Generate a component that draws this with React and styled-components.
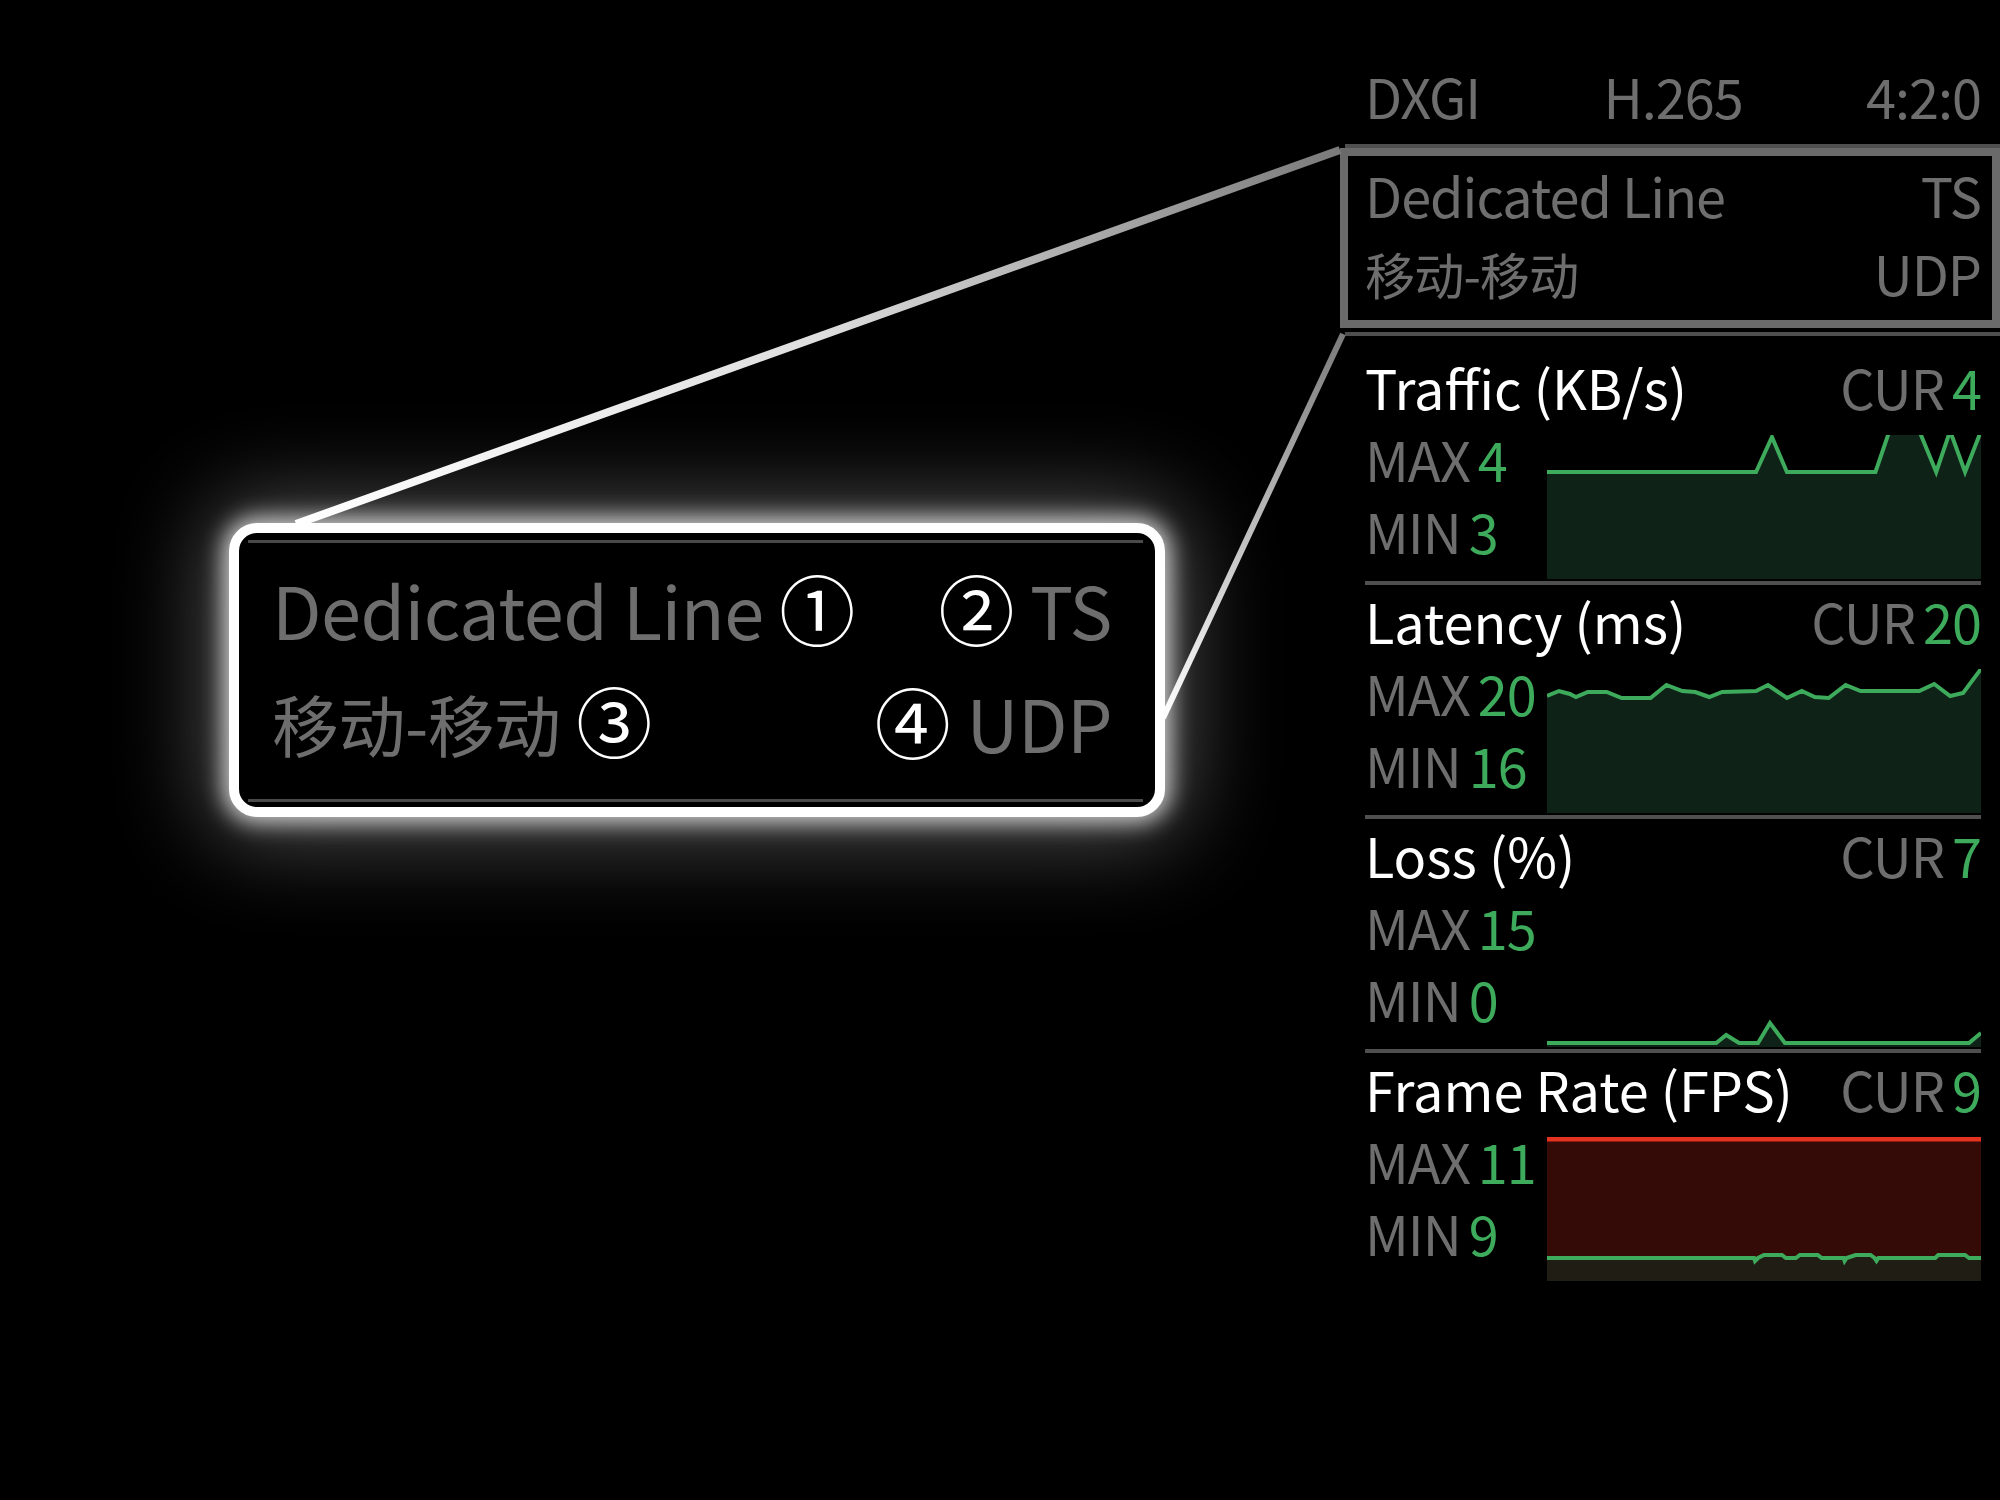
import styled, { createGlobalStyle } from "styled-components";

const GlobalStyle = createGlobalStyle`
  html, body {
    margin: 0;
    padding: 0;
    background: #000;
  }
  body {
    font-family: "Noto Sans CJK SC", "Noto Sans", sans-serif;
  }
`;

const GRAY = "#6e6e6e";
const GREEN = "#3dab5b";

const Page = styled.div`
  position: relative;
  width: 2000px;
  height: 1500px;
  overflow: hidden;
  background: #000;
  display: grid;
  grid-template-columns: 1365px 616px;
`;

const CalloutArea = styled.div`
  padding: 523px 0 0 229px;
`;

const Callout = styled.div`
  box-sizing: border-box;
  width: 936px;
  height: 294px;
  border: 10px solid #fff;
  border-radius: 28px;
  background: #000;
  box-shadow: 0 0 22px 6px rgba(255, 255, 255, 0.75),
    0 0 90px 24px rgba(255, 255, 255, 0.3);
  padding: 7px 12px 5px 9px;
  display: flex;
  flex-direction: column;
`;

const CalloutBar = styled.div`
  height: 6px;
  background: #4a4a4a;
`;

const CalloutRows = styled.div`
  flex: 1;
  padding: 9px 31px 21px 24px;
`;

const CalloutRow = styled.div`
  display: flex;
  justify-content: space-between;
  align-items: center;
  font-size: 72px;
  letter-spacing: -0.5px;
  line-height: 110px;
  color: ${GRAY};
  white-space: nowrap;
`;

const Mark = styled.span`
  color: #fff;
  font-size: 76px;
  letter-spacing: 0;
`;

const Cjk = styled.span`
  font-size: 0.93em;
`;

const Panel = styled.div`
  padding-top: 60px;
  display: flex;
  flex-direction: column;
  font-size: 54px;
  letter-spacing: -1px;
  white-space: nowrap;
`;

const TopRow = styled.div`
  display: flex;
  justify-content: space-between;
  line-height: 72px;
  color: ${GRAY};
`;

const Rule = styled.div`
  height: 4px;
  background: #4f4f4f;
  margin-top: ${(p) => p.$gap || 0}px;
  margin-right: ${(p) => (p.$wide ? -19 : 0)}px;
  margin-left: ${(p) => (p.$wide ? -20 : 0)}px;
`;

const Highlight = styled.div`
  border: 8px solid #6a6a6a;
  margin: 0 -19px 0 -25px;
  padding: 0 11px 8px 17px;
`;

const InfoRow = styled.div`
  display: flex;
  justify-content: space-between;
  line-height: 78px;
  color: ${GRAY};
`;

const Section = styled.section`
  margin-top: ${(p) => (p.$first ? 15 : 0)}px;
`;

const SectionHead = styled.div`
  display: flex;
  justify-content: space-between;
  line-height: 72px;
`;

const Title = styled.span`
  color: #fff;
  letter-spacing: 0;
`;

const Label = styled.span`
  color: ${GRAY};
  margin-right: 8px;
`;

const Value = styled.span`
  color: ${GREEN};
`;

const SectionBody = styled.div`
  display: flex;
  height: 156px;
`;

const Labels = styled.div`
  width: 182px;
  flex: none;
  display: flex;
  flex-direction: column;
  line-height: 72px;
`;

const ChartBox = styled.div`
  flex: 1;
  margin-top: 12px;
  height: 144px;
  svg {
    display: block;
    width: 100%;
    height: 144px;
  }
`;

const W = 436;
const H = 144;

const toLine = (pts) => pts.map(([x, y]) => `${x},${y}`).join(" ");
const toArea = (pts) =>
  `M0,${H} ` + pts.map(([x, y]) => `L${x},${y}`).join(" ") + ` L${W},${H} Z`;

function Chart({ points, fill = "#0f2218" }) {
  return (
    <svg viewBox={`0 0 ${W} ${H}`} preserveAspectRatio="none">
      <path d={toArea(points)} fill={fill} />
      <polyline
        points={toLine(points)}
        fill="none"
        stroke={GREEN}
        strokeWidth="4"
      />
    </svg>
  );
}

function FrameChart({ points }) {
  return (
    <svg viewBox={`0 0 ${W} ${H}`} preserveAspectRatio="none">
      <rect x="0" y="0" width={W} height={H} fill="#340b07" />
      <path d={toArea(points)} fill="#201d14" />
      <line x1="0" y1="2" x2={W} y2="2" stroke="#e3321f" strokeWidth="5" />
      <polyline points={toLine(points)} fill="none" stroke={GREEN} strokeWidth="4" />
    </svg>
  );
}

const traffic = [
  [0, 37], [210, 37], [226, 2], [241, 37], [330, 37], [344, -4], [374, -4],
  [391, 37], [405, -4], [420, 37], [436, -4],
];

const latency = [
  [0, 27], [12, 22], [23, 25], [29, 28], [41, 23], [60, 23], [75, 29], [104, 29],
  [120, 16], [136, 22], [149, 23], [163, 28], [176, 23], [210, 22], [222, 16],
  [241, 29], [256, 22], [269, 28], [283, 29], [300, 16], [315, 22], [374, 22],
  [389, 15], [405, 27], [418, 24], [436, 0],
];

const loss = [
  [0, 140], [170, 140], [180, 132], [193, 140], [212, 140], [224, 120],
  [239, 140], [424, 140], [436, 130],
];

const frame = [
  [0, 121], [208, 121], [209, 124], [212, 121], [218, 118], [236, 118],
  [240, 121], [250, 121], [254, 118], [272, 118], [276, 121], [298, 121],
  [299, 124], [301, 121], [310, 118], [325, 118], [329, 121], [331, 124],
  [333, 121], [390, 121], [393, 118], [420, 118], [424, 121], [436, 121],
];

const sections = [
  { title: "Traffic (KB/s)", cur: 4, max: 4, min: 3, points: traffic },
  { title: "Latency (ms)", cur: 20, max: 20, min: 16, points: latency },
  { title: "Loss (%)", cur: 7, max: 15, min: 0, points: loss },
  { title: "Frame Rate (FPS)", cur: 9, max: 11, min: 9, points: frame, frame: true },
];

const Connectors = styled.svg`
  position: absolute;
  left: 0;
  top: 0;
  width: 2000px;
  height: 1500px;
  pointer-events: none;
`;

export default function App() {
  return (
    <>
      <GlobalStyle />
      <Page>
        <CalloutArea>
          <Callout>
            <CalloutBar />
            <CalloutRows>
              <CalloutRow>
                <span>
                  Dedicated Line <Mark>①</Mark>
                </span>
                <span>
                  <Mark>②</Mark> TS
                </span>
              </CalloutRow>
              <CalloutRow>
                <span>
                  <Cjk>移动-移动</Cjk> <Mark>③</Mark>
                </span>
                <span>
                  <Mark>④</Mark> UDP
                </span>
              </CalloutRow>
            </CalloutRows>
            <CalloutBar />
          </Callout>
        </CalloutArea>

        <Panel>
          <TopRow>
            <span>DXGI</span>
            <span>H.265</span>
            <span>4:2:0</span>
          </TopRow>
          <Rule $gap={12} $wide />
          <Highlight>
            <InfoRow>
              <span>Dedicated Line</span>
              <span>TS</span>
            </InfoRow>
            <InfoRow>
              <Cjk>移动-移动</Cjk>
              <span>UDP</span>
            </InfoRow>
          </Highlight>
          <Rule $gap={4} $wide />

          {sections.map((s, i) => (
            <Section key={s.title} $first={i === 0}>
              <SectionHead>
                <Title>{s.title}</Title>
                <span>
                  <Label>CUR</Label>
                  <Value>{s.cur}</Value>
                </span>
              </SectionHead>
              <SectionBody>
                <Labels>
                  <span>
                    <Label>MAX</Label>
                    <Value>{s.max}</Value>
                  </span>
                  <span>
                    <Label>MIN</Label>
                    <Value>{s.min}</Value>
                  </span>
                </Labels>
                <ChartBox>
                  {s.frame ? <FrameChart points={s.points} /> : <Chart points={s.points} />}
                </ChartBox>
              </SectionBody>
              {i < sections.length - 1 && <Rule $gap={2} />}
            </Section>
          ))}
        </Panel>

        <Connectors viewBox="0 0 2000 1500">
          <defs>
            <linearGradient id="topLink" gradientUnits="userSpaceOnUse" x1="296" y1="524" x2="1340" y2="150">
              <stop offset="0" stopColor="#ffffff" />
              <stop offset="0.5" stopColor="#dedede" />
              <stop offset="1" stopColor="#7a7a7a" />
            </linearGradient>
            <linearGradient id="bottomLink" gradientUnits="userSpaceOnUse" x1="1163" y1="718" x2="1343" y2="334">
              <stop offset="0" stopColor="#ffffff" />
              <stop offset="1" stopColor="#7a7a7a" />
            </linearGradient>
          </defs>
          <line x1="296" y1="524" x2="1340" y2="150" stroke="url(#topLink)" strokeWidth="8" />
          <line x1="1163" y1="718" x2="1343" y2="334" stroke="url(#bottomLink)" strokeWidth="6" />
        </Connectors>
      </Page>
    </>
  );
}
